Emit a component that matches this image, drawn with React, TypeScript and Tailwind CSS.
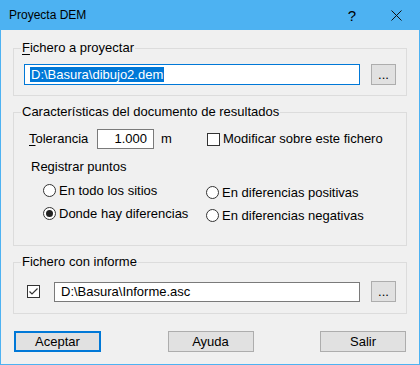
import React from "react";

const font = { fontFamily: '"Liberation Sans", Arial, sans-serif' };

function Radio({ checked }: { checked?: boolean }) {
  return (
    <span className="flex h-[13px] w-[13px] shrink-0 items-center justify-center rounded-full border border-[#333333] bg-white">
      {checked && <span className="h-[7px] w-[7px] rounded-full bg-[#222222]" />}
    </span>
  );
}

function Check({ checked }: { checked?: boolean }) {
  return (
    <span className="flex h-[13px] w-[13px] shrink-0 items-center justify-center border border-[#333333] bg-white">
      {checked && (
        <svg width="11" height="11" viewBox="0 0 11 11">
          <path d="M1.5 5.5 L4 8 L9.5 2.5" fill="none" stroke="#333333" strokeWidth="1.2" />
        </svg>
      )}
    </span>
  );
}

function Dots() {
  return (
    <div className="flex h-[21px] w-[25px] shrink-0 items-end justify-center border border-[#adadad] bg-[#e1e1e1] pb-[3px] text-[13px] leading-[13px] tracking-[0px] text-black">
      ...
    </div>
  );
}

function Group({ title, h, children }: { title: React.ReactNode; h: string; children: React.ReactNode }) {
  return (
    <div className={`relative border border-[#dcdcdc] ${h}`}>
      <span className="absolute left-[7px] top-[-9px] bg-[#f0f0f0] px-[1px] text-[13px] leading-[16px] text-black">
        {title}
      </span>
      {children}
    </div>
  );
}

export default function App() {
  return (
    <div
      className="flex h-[365px] w-[420px] flex-col border border-t-0 border-[#4db2f2] bg-[#f0f0f0] text-[13px] text-black"
      style={font}
    >
      <div className="flex h-[30px] shrink-0 items-center bg-[#4db2f2] pl-[8px]">
        <span className="flex-1 text-[12px] text-black">Proyecta DEM</span>
        <span className="w-[14px] text-center text-[15px] leading-none text-black">?</span>
        <span className="ml-[31px] mr-[17px] flex h-[12px] w-[12px] items-center justify-center">
          <svg width="11" height="11" viewBox="0 0 11 11">
            <path d="M0.5 0.5 L10.5 10.5 M10.5 0.5 L0.5 10.5" stroke="#111111" strokeWidth="1" />
          </svg>
        </span>
      </div>

      <div className="flex flex-col px-[12px]">
        <div className="mt-[18px]">
          <Group
            h="h-[48px]"
            title={
              <>
                <span className="underline underline-offset-2">F</span>ichero a proyectar
              </>
            }
          >
            <div className="flex items-start pl-[10px] pt-[15px]">
              <div className="flex h-[21px] w-[336px] items-center border border-[#0078d7] bg-white pl-[5px]">
                <span className="bg-[#0078d7] pl-[1px] pr-[1px] leading-[15px] text-white">
                  D:\Basura\dibujo2.dem
                </span>
              </div>
              <div className="ml-[11px]">
                <Dots />
              </div>
            </div>
          </Group>
        </div>

        <div className="mt-[16px]">
          <Group h="h-[134px]" title="Características del documento de resultados">
            <div className="flex flex-col pt-[16px]">
              <div className="flex h-[20px] items-center">
                <span className="ml-[15px] w-[68px]">
                  <span className="underline underline-offset-2">T</span>olerancia
                </span>
                <div className="flex h-[20px] w-[57px] items-center justify-end border border-[#7a7a7a] bg-white pr-[6px]">
                  1.000
                </div>
                <span className="ml-[7px] w-[46px]">m</span>
                <Check />
                <span className="ml-[3px]">Modificar sobre este fichero</span>
              </div>
              <div className="ml-[17px] mt-[10px] leading-[16px]">Registrar puntos</div>
              <div className="mt-[8px] flex">
                <div className="ml-[29px] flex w-[163px] flex-col gap-[8px]">
                  <div className="flex h-[15px] items-center gap-[3px]">
                    <Radio />
                    <span>En todo los sitios</span>
                  </div>
                  <div className="flex h-[15px] items-center gap-[3px]">
                    <Radio checked />
                    <span>Donde hay diferencias</span>
                  </div>
                </div>
                <div className="mt-[2px] flex flex-col gap-[8px]">
                  <div className="flex h-[15px] items-center gap-[3px]">
                    <Radio />
                    <span>En diferencias positivas</span>
                  </div>
                  <div className="flex h-[15px] items-center gap-[3px]">
                    <Radio />
                    <span>En diferencias negativas</span>
                  </div>
                </div>
              </div>
            </div>
          </Group>
        </div>

        <div className="mt-[16px]">
          <Group h="h-[52px]" title="Fichero con informe">
            <div className="flex items-center pl-[13px] pt-[18px]">
              <Check checked />
              <div className="ml-[14px] flex h-[20px] w-[306px] items-center border border-[#7a7a7a] bg-white pl-[6px]">
                D:\Basura\Informe.asc
              </div>
              <div className="ml-[11px]">
                <Dots />
              </div>
            </div>
          </Group>
        </div>

        <div className="mx-[1px] mt-[17px] flex justify-between">
          <button className="flex h-[21px] w-[87px] items-center justify-center border-2 border-[#0078d7] bg-[#e1e1e1] text-[13px]">
            Aceptar
          </button>
          <button className="flex h-[21px] w-[86px] items-center justify-center border border-[#adadad] bg-[#e1e1e1] text-[13px]">
            Ayuda
          </button>
          <button className="flex h-[21px] w-[86px] items-center justify-center border border-[#adadad] bg-[#e1e1e1] text-[13px]">
            Salir
          </button>
        </div>
      </div>
    </div>
  );
}
